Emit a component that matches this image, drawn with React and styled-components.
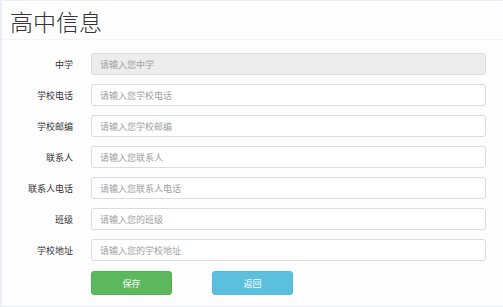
import { Fragment } from 'react';
import styled, { createGlobalStyle } from 'styled-components';

const GlobalStyle = createGlobalStyle`
  html, body {
    margin: 0;
    padding: 0;
    background: #eceef7;
    font-family: "Noto Sans CJK SC", "Liberation Sans", sans-serif;
  }
`;

// Outer frame with the thin lavender edge
const Frame = styled.div`
  width: 503px;
  height: 307px;
  box-sizing: border-box;
  padding: 1px 0 1px 2px;
  overflow: hidden;
`;

const Card = styled.div`
  background: #fdfdfe;
  height: 100%;
  display: flex;
  flex-direction: column;
`;

const Header = styled.div`
  height: 39px;
  box-sizing: border-box;
  padding: 5px 0 0 8px;
  border-bottom: 1px solid #f4f4f7;
`;

const Title = styled.h1`
  margin: 0;
  font-size: 23px;
  line-height: 30px;
  font-weight: 300;
  color: #333;
`;

const Form = styled.div`
  display: grid;
  grid-template-columns: 71px 395px;
  column-gap: 18px;
  row-gap: 9px;
  align-items: center;
  padding-top: 13px;
`;

const Label = styled.label`
  text-align: right;
  font-size: 9px;
  color: #333;
`;

const Input = styled.input`
  box-sizing: border-box;
  width: 100%;
  height: 22px;
  padding: 0 8px;
  border: 1px solid #dcdcdf;
  border-radius: 3px;
  background: ${p => (p.disabled ? '#ededee' : '#fff')};
  font-size: 9px;
  font-family: inherit;
  outline: none;
  &::placeholder {
    color: #a0a0a0;
  }
`;

const Actions = styled.div`
  grid-column: 2;
  display: flex;
  gap: 40px;
  margin-top: 1px;
`;

const Button = styled.button`
  width: 81px;
  height: 24px;
  border: 1px solid ${p => p.$border};
  border-radius: 3px;
  background: ${p => p.$bg};
  color: #fff;
  font-size: 9px;
  font-family: inherit;
  padding: 0;
`;

const fields = [
  ['中学', '请输入您中学', true],
  ['学校电话', '请输入您学校电话'],
  ['学校邮编', '请输入您学校邮编'],
  ['联系人', '请输入您联系人'],
  ['联系人电话', '请输入您联系人电话'],
  ['班级', '请输入您的班级'],
  ['学校地址', '请输入您的学校地址'],
];

export default function App() {
  return (
    <Frame>
      <GlobalStyle />
      <Card>
        <Header>
          <Title>高中信息</Title>
        </Header>
        <Form>
          {fields.map(([label, ph, disabled]) => (
            <Fragment key={label}>
              <Label>{label}</Label>
              <Input placeholder={ph} disabled={disabled} />
            </Fragment>
          ))}
          <Actions>
            <Button $bg="#5cb85c" $border="#52b152">保存</Button>
            <Button $bg="#5bc0de" $border="#52bbdb">返回</Button>
          </Actions>
        </Form>
      </Card>
    </Frame>
  );
}
